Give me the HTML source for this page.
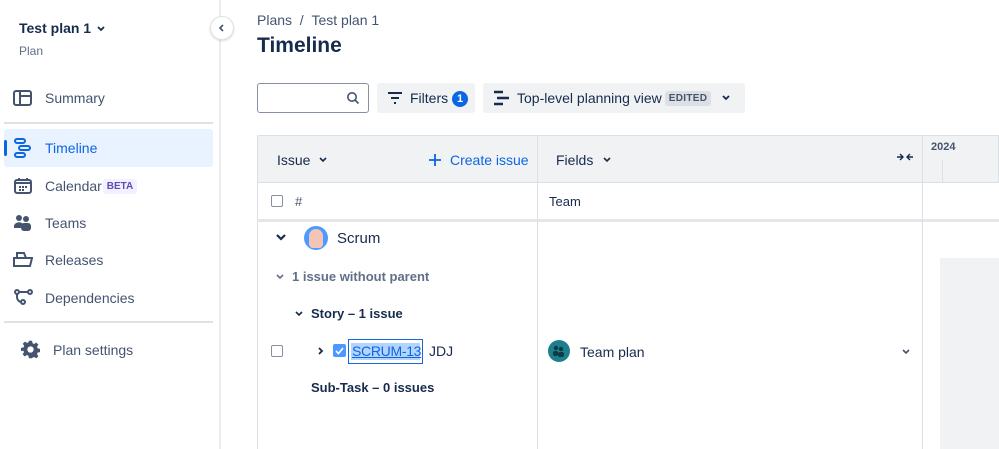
<!DOCTYPE html>
<html><head><style>
*{box-sizing:border-box;margin:0;padding:0}
body{width:999px;height:449px;overflow:hidden;background:#fff;font-family:"Liberation Sans",sans-serif;color:#172b4d;position:relative}
.a{position:absolute;white-space:nowrap}
.nav{font-size:14px;color:#44546f}
svg{position:absolute}
</style></head><body>
<div class="a" style="left:219px;top:0;width:2px;height:449px;background:#ebecf0"></div>
<div class="a" style="left:210px;top:16px;width:24px;height:24px;border-radius:50%;background:#fff;border:1px solid #dfe1e6;box-shadow:0 1px 2px rgba(0,0,0,.15)"></div>
<svg style="left:217px;top:23px" width="10" height="10"><path d="M6 2L3 5l3 3" stroke="#44546f" stroke-width="1.6" fill="none"/></svg>
<div class="a" style="left:19px;top:20px;font-size:14px;font-weight:bold;color:#172b4d">Test plan 1</div>
<svg style="left:96px;top:24px" width="10" height="10"><path d="M2 3l3 3 3-3" stroke="#172b4d" stroke-width="1.8" fill="none"/></svg>
<div class="a" style="left:19px;top:44px;font-size:12px;color:#626f86">Plan</div>

<svg style="left:13px;top:90px" width="20" height="16"><rect x="1" y="1" width="17" height="14" rx="2" stroke="#44546f" stroke-width="2" fill="none"/><path d="M7 1v14M7 6h11" stroke="#44546f" stroke-width="2"/></svg>
<div class="a nav" style="left:45px;top:90px">Summary</div>
<div class="a" style="left:4px;top:122px;width:209px;height:2px;background:#dfe1e6"></div>

<div class="a" style="left:4px;top:129px;width:209px;height:38px;background:#e9f2ff;border-radius:3px"></div>
<div class="a" style="left:4px;top:140px;width:3px;height:16px;background:#0c66e4;border-radius:2px"></div>
<svg style="left:14px;top:138px" width="18" height="20"><g stroke="#0c66e4" stroke-width="2" fill="none"><rect x="1" y="1" width="10" height="4" rx="2"/><rect x="5" y="8" width="11" height="4" rx="2"/><rect x="1" y="15" width="10" height="4" rx="2"/></g></svg>
<div class="a" style="left:45px;top:140px;font-size:14px;color:#0c66e4">Timeline</div>

<svg style="left:14px;top:177px" width="18" height="17"><rect x="1" y="3" width="16" height="13" rx="2" stroke="#44546f" stroke-width="2" fill="none"/><path d="M1 6h16M5 1v3M13 1v3" stroke="#44546f" stroke-width="2"/><g fill="#44546f"><rect x="5" y="9" width="2" height="2"/><rect x="8" y="9" width="2" height="2"/><rect x="11" y="9" width="2" height="2"/><rect x="5" y="12" width="2" height="2"/><rect x="8" y="12" width="2" height="2"/></g></svg>
<div class="a nav" style="left:45px;top:178px">Calendar</div>
<div class="a" style="left:103px;top:179px;width:34px;height:15px;background:#f3f0ff;border-radius:3px;font-size:10px;font-weight:bold;color:#5e4db2;text-align:center;line-height:15px">BETA</div>

<svg style="left:14px;top:214px" width="18" height="17" fill="#44546f"><circle cx="5" cy="4" r="3"/><circle cx="12" cy="5" r="3"/><path d="M0 13a5 4 0 0 1 9 -3v4H0z"/><rect x="7" y="9" width="10" height="8" rx="3"/></svg>
<div class="a nav" style="left:45px;top:215px">Teams</div>

<svg style="left:13px;top:251px" width="20" height="17"><path d="M4 7V2h7l2 5M1 7h18l-2 8H1z" stroke="#44546f" stroke-width="2" fill="none"/></svg>
<div class="a nav" style="left:45px;top:252px">Releases</div>

<svg style="left:14px;top:289px" width="20" height="16"><g stroke="#44546f" stroke-width="2" fill="none"><circle cx="3" cy="3" r="2"/><circle cx="16" cy="3" r="2"/><circle cx="9" cy="13" r="2"/><path d="M5 3h9M3 5v3a5 5 0 0 0 4 5"/></g></svg>
<div class="a nav" style="left:45px;top:290px">Dependencies</div>
<div class="a" style="left:4px;top:321px;width:209px;height:2px;background:#dfe1e6"></div>

<svg style="left:21px;top:340px" width="19" height="19" viewBox="0 0 24 24"><path fill="#44546f" d="M10 1h4l.6 3.1 2 .9 2.6-1.8 2.8 2.8-1.8 2.6.9 2 3.1.6v4l-3.1.6-.9 2 1.8 2.6-2.8 2.8-2.6-1.8-2 .9L14 23h-4l-.6-3.1-2-.9-2.6 1.8-2.8-2.8 1.8-2.6-.9-2L0 14v-4l3.1-.6.9-2L2.2 4.8 5 2l2.6 1.8 2-.9z"/><circle cx="12" cy="12" r="4" fill="#fff"/></svg>
<div class="a nav" style="left:53px;top:342px">Plan settings</div>

<div class="a" style="left:257px;top:12px;font-size:14px;color:#44546f">Plans &nbsp;/ &nbsp;Test plan 1</div>
<div class="a" style="left:257px;top:34px;font-size:21px;font-weight:bold;color:#172b4d">Timeline</div>

<div class="a" style="left:257px;top:83px;width:112px;height:30px;border:1.5px solid #8590a2;border-radius:3px"></div>
<svg style="left:346px;top:91px" width="14" height="14"><circle cx="6" cy="6" r="4.2" stroke="#44546f" stroke-width="1.6" fill="none"/><path d="M9 9l3.5 3.5" stroke="#44546f" stroke-width="1.6"/></svg>
<div class="a" style="left:377px;top:83px;width:98px;height:30px;background:#f1f2f4;border-radius:3px"></div>
<svg style="left:387px;top:91px" width="16" height="14"><path d="M1 2h14M4 7h8M7 12h2" stroke="#172b4d" stroke-width="2"/></svg>
<div class="a" style="left:410px;top:90px;font-size:14px;color:#172b4d">Filters</div>
<div class="a" style="left:452px;top:91px;width:16px;height:16px;border-radius:50%;background:#0c66e4;color:#fff;font-size:11px;font-weight:bold;text-align:center;line-height:16px">1</div>
<div class="a" style="left:483px;top:83px;width:262px;height:30px;background:#f1f2f4;border-radius:3px"></div>
<svg style="left:494px;top:90px" width="16" height="16"><path d="M0 2h9M3 8h12M0 14h9" stroke="#172b4d" stroke-width="2.4"/></svg>
<div class="a" style="left:517px;top:90px;font-size:14px;color:#172b4d">Top-level planning view</div>
<div class="a" style="left:665px;top:91px;width:46px;height:15px;background:#dcdfe4;border-radius:3px;font-size:10px;font-weight:bold;color:#44546f;text-align:center;line-height:15px;letter-spacing:.3px">EDITED</div>
<svg style="left:721px;top:93px" width="10" height="10"><path d="M2 3l3 3 3-3" stroke="#172b4d" stroke-width="1.8" fill="none"/></svg>

<div class="a" style="left:257px;top:135px;width:742px;height:47px;background:#f1f2f4;border:1px solid #dcdfe4;border-bottom:none;border-radius:3px 0 0 0"></div>
<div class="a" style="left:257px;top:135px;width:1px;height:314px;background:#dcdfe4"></div>
<div class="a" style="left:257px;top:182px;width:742px;height:1px;background:#dcdfe4"></div>
<div class="a" style="left:257px;top:219px;width:742px;height:3px;background:#e4e6ea"></div>
<div class="a" style="left:537px;top:135px;width:1px;height:314px;background:#dcdfe4"></div>
<div class="a" style="left:922px;top:135px;width:1px;height:314px;background:#dcdfe4"></div>
<div class="a" style="left:942px;top:160px;width:1px;height:22px;background:#dcdfe4"></div>
<div class="a" style="left:940px;top:258px;width:59px;height:191px;background:#f1f2f4"></div>

<div class="a" style="left:277px;top:152px;font-size:14px">Issue</div>
<svg style="left:318px;top:155px" width="10" height="10"><path d="M2 3l3 3 3-3" stroke="#172b4d" stroke-width="1.6" fill="none"/></svg>
<svg style="left:428px;top:153px" width="14" height="14"><path d="M7 1v12M1 7h12" stroke="#0c66e4" stroke-width="1.8"/></svg>
<div class="a" style="left:450px;top:152px;font-size:14px;color:#0c66e4">Create issue</div>
<div class="a" style="left:556px;top:152px;font-size:14px">Fields</div>
<svg style="left:602px;top:155px" width="10" height="10"><path d="M2 3l3 3 3-3" stroke="#172b4d" stroke-width="1.6" fill="none"/></svg>
<svg style="left:896px;top:151px" width="18" height="12"><path d="M1 6h6M4 3l3 3-3 3M17 6h-6M14 3l-3 3 3 3" stroke="#172b4d" stroke-width="1.4" fill="none"/></svg>
<div class="a" style="left:931px;top:141px;font-size:11px;font-weight:bold;color:#44546f">2024</div>

<div class="a" style="left:271px;top:195px;width:12px;height:12px;border:1.5px solid #8590a2;border-radius:2px"></div>
<div class="a" style="left:295px;top:194px;font-size:13px;color:#44546f">#</div>
<div class="a" style="left:549px;top:194px;font-size:13px">Team</div>

<svg style="left:275px;top:233px" width="12" height="10"><path d="M2 2l4 4 4-4" stroke="#172b4d" stroke-width="2.2" fill="none"/></svg>
<div class="a" style="left:304px;top:226px;width:24px;height:24px;border-radius:50%;background:#4c9aff"></div>
<div class="a" style="left:309px;top:229px;width:14px;height:19px;border-radius:7px 7px 4px 4px;background:#f4c5b4"></div>
<div class="a" style="left:337px;top:230px;font-size:15px">Scrum</div>

<svg style="left:275px;top:272px" width="10" height="10"><path d="M2 3l3 3 3-3" stroke="#626f86" stroke-width="1.6" fill="none"/></svg>
<div class="a" style="left:292px;top:269px;font-size:13px;font-weight:bold;color:#626f86">1 issue without parent</div>
<svg style="left:294px;top:309px" width="10" height="10"><path d="M2 3l3 3 3-3" stroke="#172b4d" stroke-width="1.6" fill="none"/></svg>
<div class="a" style="left:311px;top:306px;font-size:13px;font-weight:bold">Story – 1 issue</div>

<div class="a" style="left:271px;top:345px;width:12px;height:12px;border:1.5px solid #8590a2;border-radius:2px"></div>
<svg style="left:316px;top:346px" width="10" height="10"><path d="M3 2l3 3-3 3" stroke="#172b4d" stroke-width="1.8" fill="none"/></svg>
<div class="a" style="left:333px;top:344px;width:13px;height:13px;background:#4c9aff;border-radius:2px"></div>
<svg style="left:334px;top:345px" width="11" height="11"><path d="M2 6l2.5 2.5L9 3" stroke="#fff" stroke-width="1.6" fill="none"/></svg>
<div class="a" style="left:348px;top:339px;width:75px;height:25px;border:1.5px solid #1868db"></div>
<div class="a" style="left:351px;top:343px;height:17px;width:69px;background:#b3d4ff"></div>
<div class="a" style="left:352px;top:343px;font-size:14px;color:#0c66e4;text-decoration:underline;letter-spacing:-0.3px">SCRUM-13</div>
<div class="a" style="left:429px;top:343px;font-size:14px">JDJ</div>
<div class="a" style="left:311px;top:380px;font-size:13px;font-weight:bold">Sub-Task – 0 issues</div>

<div class="a" style="left:548px;top:340px;width:22px;height:22px;border-radius:50%;background:#1d7f8c"></div>
<svg style="left:552px;top:344px" width="14" height="14" fill="#0b3b44"><circle cx="4" cy="4" r="2.2"/><circle cx="9" cy="5" r="2.2"/><rect x="1" y="7" width="5" height="5" rx="2"/><rect x="6" y="8" width="6" height="5" rx="2"/></svg>
<div class="a" style="left:580px;top:344px;font-size:14px">Team plan</div>
<svg style="left:901px;top:347px" width="10" height="10"><path d="M2 3l3 3 3-3" stroke="#44546f" stroke-width="1.6" fill="none"/></svg>
</body></html>
